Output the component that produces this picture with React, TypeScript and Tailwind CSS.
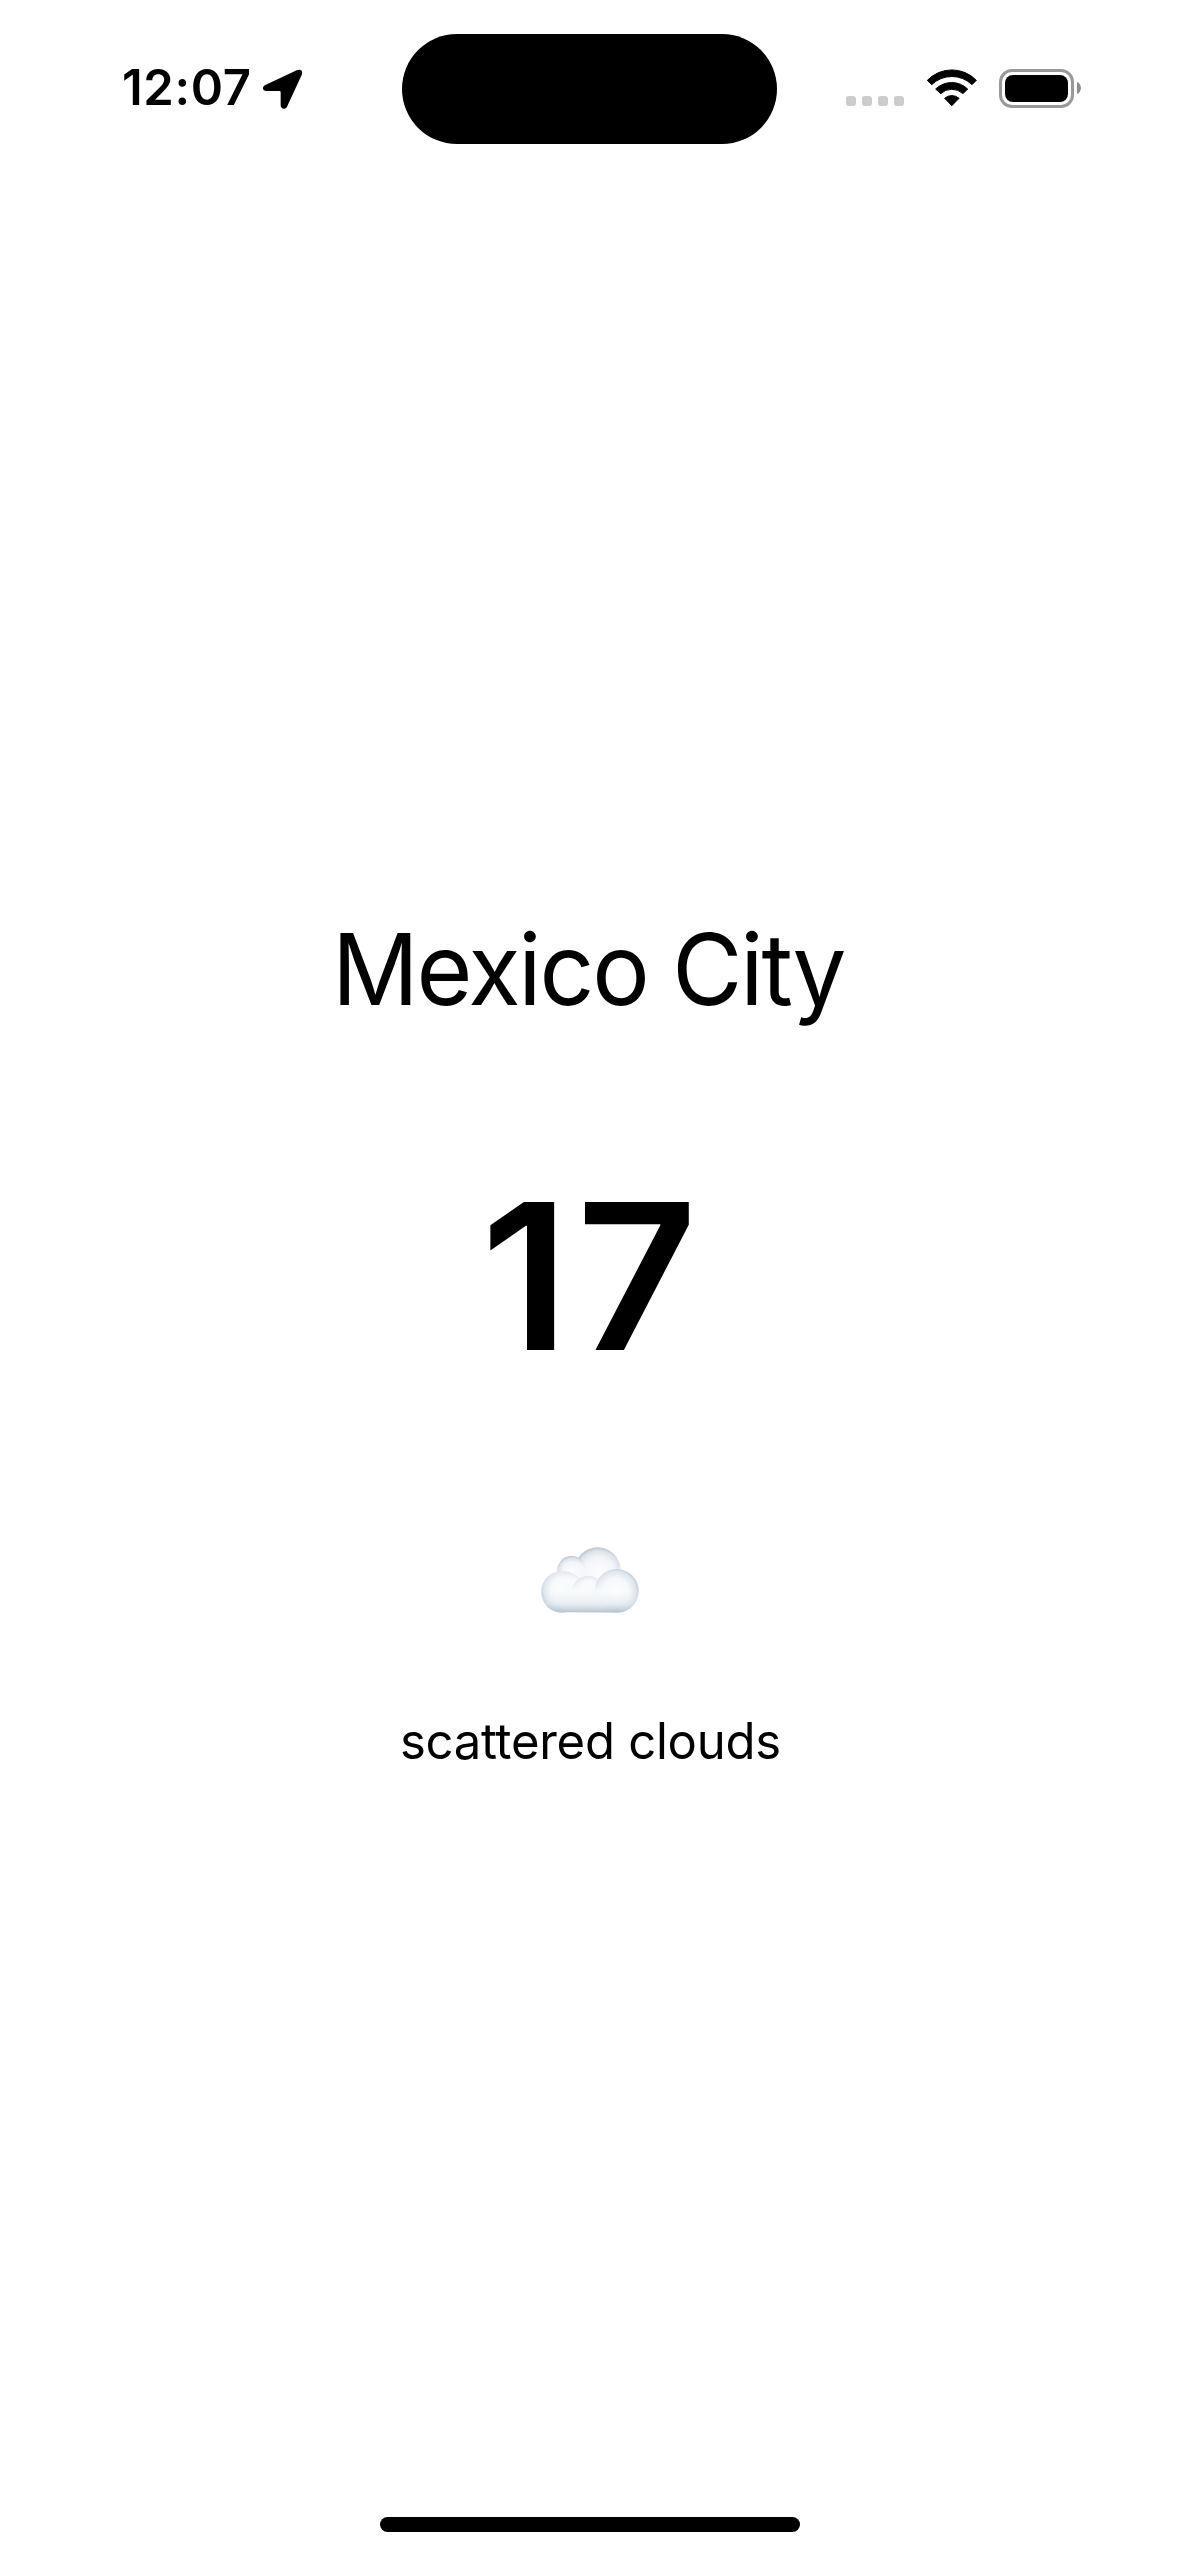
function LocationArrow() {
  return (
    <svg className="mt-px h-[44px] w-[45px]" viewBox="450 48 135 132" fill="#000">
      <path d="M466 102 L560 58 C572 53 580 60 575 72 L531 167 C526 177 512 175 512 163 L512 124 Q512 120 508 120 L469 120 C457 120 455 107 466 102 Z" />
    </svg>
  );
}

function WifiIcon() {
  return (
    <svg className="h-[38px] w-[52px]" viewBox="287 56 156 114" fill="#000" stroke="#000" strokeWidth="3" strokeLinejoin="round">
      <path d="M291 90 A102 102 0 0 1 438 90 L425 103 A87 87 0 0 0 304 103 Z" />
      <path d="M316 116 A69 69 0 0 1 412 116 L398 130 A49 49 0 0 0 331 130 Z" />
      <path d="M343 144 A32 32 0 0 1 386 144 L364.500 166 Z" />
    </svg>
  );
}

function Battery() {
  return (
    <div className="flex items-center gap-[3px]">
      <div className="h-[39px] w-[75px] rounded-[13px] border-[3px] border-[#999] p-[3px]">
        <div className="h-full w-full rounded-[8px] bg-black" />
      </div>
      <svg className="h-[12px] w-[4px]" viewBox="0 0 4 12" fill="#8c8c8c">
        <path d="M0 0 C5.300 2 5.300 10 0 12 Z" />
      </svg>
    </div>
  );
}

function StatusBar() {
  return (
    <header className="flex h-[176px] items-center">
      <div className="flex w-[402px] items-center gap-[9px] pl-[122px]">
        <time className="text-[49px] leading-[60px] font-semibold tracking-[0.6px]">12:07</time>
        <LocationArrow />
      </div>
      <div className="mt-[2px] h-[110px] w-[375px] rounded-full bg-black" />
      <div className="flex flex-1 items-center justify-end pr-[98px]">
        <div className="mt-[26px] mr-[22px] flex gap-[6px]">
          <span className="size-[10px] rounded-[3px] bg-[#ccc]" />
          <span className="size-[10px] rounded-[3px] bg-[#ccc]" />
          <span className="size-[10px] rounded-[3px] bg-[#ccc]" />
          <span className="size-[10px] rounded-[3px] bg-[#ccc]" />
        </div>
        <WifiIcon />
        <div className="ml-[21px]">
          <Battery />
        </div>
      </div>
    </header>
  );
}

function Cloud() {
  return (
    <svg className="h-[100px] w-[140px]" viewBox="0 0 420 300" role="img" aria-label="Cloud">
      <defs>
        <radialGradient id="back" cx="0.52" cy="0.56" r="0.57">
          <stop offset="0" stopColor="#fdfdfe" />
          <stop offset="0.6" stopColor="#f3f5f8" />
          <stop offset="0.85" stopColor="#dde3ea" />
          <stop offset="1" stopColor="#b3c0ce" />
        </radialGradient>
        <radialGradient id="side" cx="0.53" cy="0.46" r="0.56">
          <stop offset="0" stopColor="#fefeff" />
          <stop offset="0.55" stopColor="#f6f8fa" />
          <stop offset="0.84" stopColor="#dfe5ec" />
          <stop offset="1" stopColor="#b6c3d0" />
        </radialGradient>
        <radialGradient id="right" cx="0.47" cy="0.52" r="0.56">
          <stop offset="0" stopColor="#fefeff" />
          <stop offset="0.55" stopColor="#f6f8fa" />
          <stop offset="0.84" stopColor="#dfe5ec" />
          <stop offset="1" stopColor="#b6c3d0" />
        </radialGradient>
        <linearGradient id="base" gradientUnits="userSpaceOnUse" x1="0" y1="185" x2="0" y2="248">
          <stop offset="0" stopColor="#e6ebf1" stopOpacity="0" />
          <stop offset="0.55" stopColor="#dbe3ea" stopOpacity="0.5" />
          <stop offset="1" stopColor="#b3c2cf" />
        </linearGradient>
        <linearGradient id="fadeDown" gradientUnits="userSpaceOnUse" x1="0" y1="138" x2="0" y2="190">
          <stop offset="0" stopColor="#fff" />
          <stop offset="1" stopColor="#fff" stopOpacity="0" />
        </linearGradient>
        <mask id="crest">
          <rect x="140" y="130" width="130" height="70" fill="url(#fadeDown)" />
        </mask>
        <clipPath id="outline">
          <path d="M126 247 C88 247 64 220 64 185 C64 149 91 122 126 122 C150 122 165 134 174 147 L240 130 L290 117 C328 117 356 147 356 183 C356 219 328 248 290 248 Z" />
        </clipPath>
        <filter id="soft" x="-40%" y="-40%" width="180%" height="180%">
          <feGaussianBlur stdDeviation="9" />
        </filter>
      </defs>
      <circle cx="233" cy="121" r="69" fill="url(#back)" />
      <circle cx="155" cy="121" r="43" fill="url(#back)" />
      <ellipse cx="190" cy="132" rx="20" ry="36" fill="#f6f8fa" filter="url(#soft)" />
      <circle cx="127" cy="185" r="63" fill="url(#side)" />
      <g clipPath="url(#outline)">
        <rect x="127" y="160" width="160" height="88" fill="#f8fafb" />
        <ellipse cx="176" cy="175" rx="44" ry="40" fill="#f8fafb" filter="url(#soft)" />
      </g>
      <circle cx="204" cy="186" r="48" fill="url(#side)" mask="url(#crest)" />
      <circle cx="290" cy="183" r="66" fill="url(#right)" />
      <g clipPath="url(#outline)">
        <ellipse cx="150" cy="206" rx="52" ry="34" fill="#f8fafb" filter="url(#soft)" />
        <ellipse cx="232" cy="212" rx="36" ry="40" fill="#f8fafb" filter="url(#soft)" />
        <rect x="60" y="183" width="300" height="66" fill="url(#base)" />
      </g>
    </svg>
  );
}

export default function App() {
  return (
    <div className="flex h-[2556px] w-[1179px] flex-col overflow-hidden bg-white font-[Inter,sans-serif] text-black">
      <StatusBar />
      <main className="flex flex-1 flex-col items-center pt-[733px]">
        <h1 className="mr-[3px] scale-x-[0.97] text-[99px] leading-[120px] tracking-[-2.25px] whitespace-nowrap">Mexico City</h1>
        <p className="-mr-[7px] mt-[127px] scale-x-[1.03] text-[203.5px] leading-[240px] font-semibold tracking-[6.9px]">17</p>
        <div className="mt-[134px]">
          <Cloud />
        </div>
        <p className="-mr-px mt-[81px] scale-x-[0.98] text-[50px] leading-[60px] tracking-[-0.25px] whitespace-nowrap">scattered clouds</p>
      </main>
      <footer className="flex justify-center pb-[24px]">
        <div className="h-[15px] w-[420px] rounded-full bg-black" />
      </footer>
    </div>
  );
}
